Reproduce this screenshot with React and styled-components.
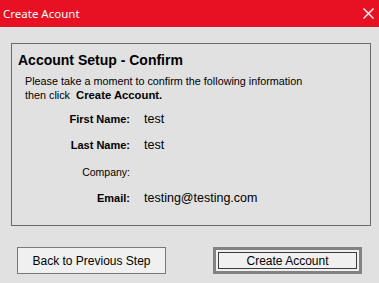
import React from 'react';
import styled, { createGlobalStyle } from 'styled-components';

const GlobalStyle = createGlobalStyle`
  html, body {
    margin: 0;
    padding: 0;
    background: #e1e1e1;
  }
  body {
    font-family: 'Liberation Sans', Arial, sans-serif;
    color: #000;
  }
`;

const Window = styled.div`
  width: 379px;
  height: 283px;
  background: #e1e1e1;
  display: flex;
  flex-direction: column;
  overflow: hidden;
`;

const TitleBar = styled.div`
  height: 27px;
  background: #e81123;
  display: flex;
  align-items: center;
  justify-content: space-between;
  padding: 0 5px 1px 3px;
  box-sizing: border-box;
`;

const Title = styled.span`
  color: #fff;
  font-family: 'Noto Sans', 'Open Sans', sans-serif;
  font-size: 11.5px;
`;

const CloseButton = styled.svg`
  width: 11px;
  height: 11px;
  display: block;
`;

const Body = styled.div`
  padding: 16px 8px 0 11px;
  display: flex;
  flex-direction: column;
`;

const GroupBox = styled.section`
  height: 183px;
  box-sizing: border-box;
  border: 1px solid #6a6a6a;
  padding: 8px 6px 0 13px;
`;

const Heading = styled.h2`
  margin: 0 0 0 -7px;
  font-size: 14px;
  font-weight: bold;
  line-height: 17px;
`;

const Intro = styled.p`
  margin: 5px 0 0;
  font-size: 10.8px;
  line-height: 14px;
`;

const Strong = styled.b`
  font-size: 11.3px;
  margin-left: 3px;
`;

const Fields = styled.dl`
  margin: 4px 0 0;
  display: grid;
  grid-template-columns: 105px 1fr;
  column-gap: 14px;
  row-gap: 0;
  align-items: baseline;
`;

const Label = styled.dt`
  text-align: right;
  font-size: ${({ $plain }) => ($plain ? '10.5px' : '11px')};
  font-weight: ${({ $plain }) => ($plain ? 'normal' : 'bold')};
  line-height: 26.3px;
`;

const Value = styled.dd`
  margin: 0;
  font-size: 12.5px;
  line-height: 26.3px;
`;

const Actions = styled.div`
  display: flex;
  justify-content: space-between;
  padding: 21px 9px 0 6px;
`;

const Button = styled.button`
  width: 149px;
  height: 27px;
  box-sizing: border-box;
  background: #f0f0f0;
  font-family: 'Liberation Sans', Arial, sans-serif;
  font-size: 12px;
  color: #000;
  padding: 0;
  border: ${({ $default }) => ($default ? '3px solid #828282' : '1px solid #7a7a7a')};
  display: flex;
  align-items: center;
  justify-content: center;
`;

const FocusRing = styled.span`
  flex: 1;
  align-self: stretch;
  margin: 2px;
  border: 1px solid #3c3c3c;
  display: flex;
  align-items: center;
  justify-content: center;
`;

const fields = [
  { label: 'First Name:', value: 'test' },
  { label: 'Last Name:', value: 'test' },
  { label: 'Company:', value: '', plain: true },
  { label: 'Email:', value: 'testing@testing.com' },
];

const App = () => (
  <>
    <GlobalStyle />
    <Window>
      <TitleBar>
        <Title>Create Acount</Title>
        <CloseButton viewBox="0 0 11 11">
          <path d="M0.5 0.5 L10.5 10.5 M10.5 0.5 L0.5 10.5" stroke="#fff" strokeWidth="1.3" />
        </CloseButton>
      </TitleBar>
      <Body>
        <GroupBox>
          <Heading>Account Setup - Confirm</Heading>
          <Intro>
            Please take a moment to confirm the following information
            <br />
            then click <Strong>Create Account.</Strong>
          </Intro>
          <Fields>
            {fields.map((f) => (
              <React.Fragment key={f.label}>
                <Label $plain={f.plain}>{f.label}</Label>
                <Value>{f.value}</Value>
              </React.Fragment>
            ))}
          </Fields>
        </GroupBox>
        <Actions>
          <Button>Back to Previous Step</Button>
          <Button $default>
            <FocusRing>Create Account</FocusRing>
          </Button>
        </Actions>
      </Body>
    </Window>
  </>
);

export default App;
